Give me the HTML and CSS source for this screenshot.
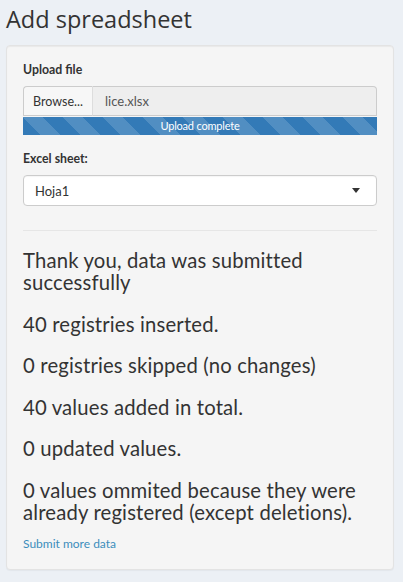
FILE: index.html
```html
<!DOCTYPE html>
<html>
<head>
<meta charset="utf-8">
<link rel="stylesheet" href="styles.css">
</head>
<body>
<h2 class="title">Add spreadsheet</h2>
<div class="well">
  <div class="field">
    <label class="lbl">Upload file</label>
    <div class="input-group">
      <span class="btn">Browse...</span>
      <span class="filename">lice.xlsx</span>
    </div>
    <div class="progress"><div class="bar">Upload complete</div></div>
  </div>
  <div class="field field-select">
    <label class="lbl">Excel sheet:</label>
    <div class="select"><span class="sel-text">Hoja1</span><span class="caret"></span></div>
  </div>
  <hr class="sep">
  <div class="msgs">
    <p class="msg">Thank you, data was submitted successfully</p>
    <p class="msg">40 registries inserted.</p>
    <p class="msg">0 registries skipped (no changes)</p>
    <p class="msg">40 values added in total.</p>
    <p class="msg">0 updated values.</p>
    <p class="msg last">0 values ommited because they were already registered (except deletions).</p>
  </div>
  <a class="more" href="#">Submit more data</a>
</div>
</body>
</html>
```
FILE: styles.css
```css
html, body {
  margin: 0;
  padding: 0;
}
body {
  background: #ecf0f5;
  font-family: Lato, "Liberation Sans", sans-serif;
  color: #333;
  width: 403px;
  height: 582px;
  overflow: hidden;
}
.title {
  font-family: "Open Sans", sans-serif;
  font-weight: 400;
  font-size: 23.5px;
  line-height: 26px;
  margin: 6px 0 13px 6px;
  color: #333;
}
.well {
  margin-left: 6px;
  width: 388px;
  box-sizing: border-box;
  background: #f5f5f5;
  border: 1px solid #e3e3e3;
  border-radius: 4px;
  box-shadow: inset 0 1px 1px rgba(0,0,0,.05), 0 1px 1px rgba(0,0,0,.04);
  padding: 15px 16px 17px 16px;
}
.lbl {
  display: block;
  font-weight: 700;
  font-size: 12.3px;
  line-height: 18px;
  margin-bottom: 7px;
}
.input-group {
  display: flex;
  height: 30px;
}
.btn {
  box-sizing: border-box;
  width: 70px;
  display: flex;
  align-items: center;
  justify-content: center;
  background: #f7f7f7;
  border: 1px solid #ccc;
  border-right: 1px solid #ddd;
  border-radius: 4px 0 0 0;
  font-size: 12.5px;
  color: #333;
}
.filename {
  flex: 1;
  box-sizing: border-box;
  display: flex;
  align-items: center;
  padding-left: 12px;
  background: #eee;
  border: 1px solid #ccc;
  border-left: 0;
  border-radius: 0 4px 0 0;
  font-size: 13px;
  color: #555;
}
.progress {
  height: 18px;
  margin-top: 1px;
  background: #f5f5f5;
}
.bar {
  height: 100%;
  background-color: #337ab7;
  background-image: linear-gradient(45deg, rgba(255,255,255,.15) 25%, transparent 25%, transparent 50%, rgba(255,255,255,.15) 50%, rgba(255,255,255,.15) 75%, transparent 75%, transparent);
  background-size: 40px 40px;
  color: #fff;
  font-size: 11px;
  letter-spacing: -0.2px;
  line-height: 18px;
  text-align: center;
}
.field-select {
  margin-top: 15px;
}
.select {
  box-sizing: border-box;
  height: 31px;
  background: #fff;
  border: 1px solid #ccc;
  border-radius: 4px;
  display: flex;
  align-items: center;
  justify-content: space-between;
  padding: 0 16px 0 11px;
  box-shadow: inset 0 1px 1px rgba(0,0,0,.04);
}
.sel-text {
  font-size: 13px;
  color: #333;
}
.caret {
  width: 0;
  height: 0;
  border-style: solid;
  border-width: 5px 4.5px 0 4.5px;
  border-color: #333 transparent transparent transparent;
}
.sep {
  border: 0;
  border-top: 1px solid #e6e6e6;
  margin: 24px 0 18px 0;
}
.msg {
  font-size: 20.3px;
  letter-spacing: 0.16px;
  line-height: 22px;
  margin: 0 0 19.5px 0;
  color: #333;
}
.msg.last {
  margin-bottom: 12px;
}
.more {
  display: block;
  font-size: 12px;
  line-height: 17px;
  color: #3c8dbc;
  text-decoration: none;
}
```
